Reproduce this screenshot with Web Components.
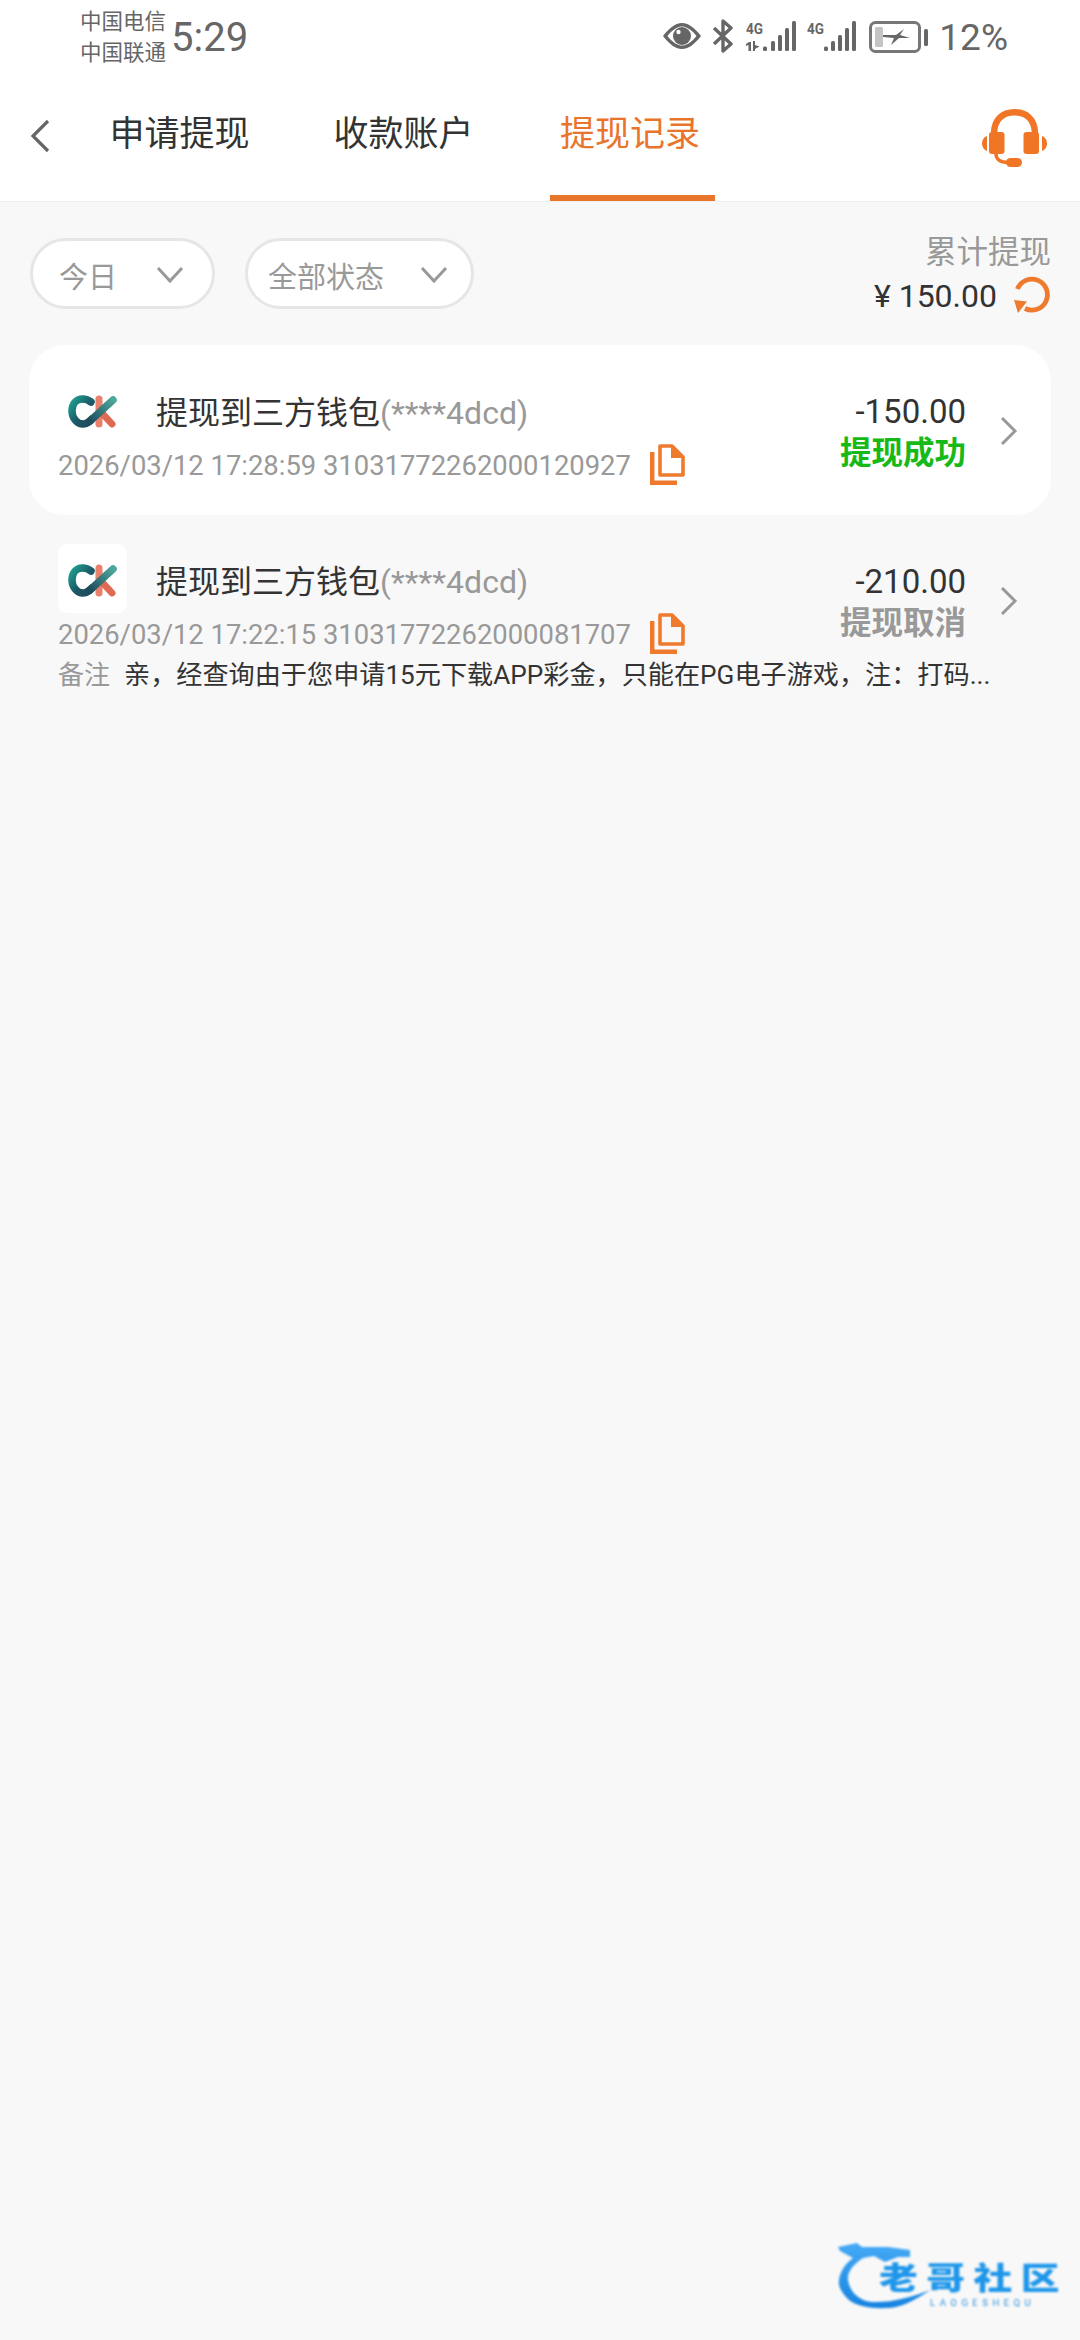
<!DOCTYPE html>
<html lang="zh">
<head>
<meta charset="utf-8">
<title>提现记录</title>
<style>
	html, body {
		margin: 0;
		padding: 0;
		background: #f8f8f8;
		font-family: Roboto, "Noto Sans CJK SC", sans-serif;
	}
	body {
		width: 1080px;
		height: 2340px;
		overflow: hidden;
		position: relative;
	}
</style>
</head>
<body>
<status-bar></status-bar>
<tab-bar>
	<tab-item>申请提现</tab-item>
	<tab-item>收款账户</tab-item>
	<tab-item active>提现记录</tab-item>
</tab-bar>
<filter-bar>
	<filter-pill style="--pl:26px;--pr:28px;--gap:39px">今日</filter-pill>
	<filter-pill style="--pl:20px;--pr:23px;--gap:36px">全部状态</filter-pill>
	<withdraw-total slot="total">¥ 150.00</withdraw-total>
</filter-bar>
<record-list>
	<record-row card>
		<span slot="account">(****4dcd)</span>
		<span slot="meta">2026/03/12 17:28:59 31031772262000120927</span>
		<span slot="amount">-150.00</span>
		<span slot="state" style="color:#17b917">提现成功</span>
	</record-row>
	<record-row>
		<span slot="account">(****4dcd)</span>
		<span slot="meta">2026/03/12 17:22:15 31031772262000081707</span>
		<span slot="amount">-210.00</span>
		<span slot="state" style="color:#999">提现取消</span>
		<span slot="note">亲，经查询由于您申请15元下载APP彩金，只能在PG电子游戏，注：打码...</span>
	</record-row>
</record-list>
<water-mark></water-mark>

<script>
// status bar
window.customElements.define('status-bar', class extends HTMLElement {
	constructor() {
		super();
		let shadowRoot = this.attachShadow({mode: 'open'});
		shadowRoot.innerHTML = `
<style>
	:host {
		display: flex;
		align-items: flex-start;
		height: 72px;
		box-sizing: border-box;
		padding: 6px 72px 0 80px;
		background: #fff;
		color: #666;
	}
	.carrier {
		font-size: 21.500px;
		line-height: 31px;
		width: 91px;
	}
	.time {
		font-size: 40px;
		line-height: 40px;
		margin-top: 12px;
	}
	.icons {
		margin-left: auto;
		display: flex;
		align-items: flex-start;
		padding-top: 14px;
	}
	svg { display: block; fill: #666; flex: none; }
	.pct {
		font-size: 37px;
		line-height: 38px;
		margin: -1px 0 0 11px;
	}
	text { font: bold 15px Roboto, sans-serif; }
</style>
<div class="carrier">中国电信<br>中国联通</div>
<div class="time">5:29</div>
<div class="icons">
	<svg width="38" height="26" viewBox="0 0 38 26" style="margin-top:3px">
		<path d="M0 13 C7 4 13 0 19 0 C25 0 31 4 38 13 C31 22 25 26 19 26 C13 26 7 22 0 13Z M4.500 13 C10 20 15 22.500 19 22.500 C23 22.500 28 20 33.500 13 C28 6 23 3.500 19 3.500 C15 3.500 10 6 4.500 13Z"/>
		<circle cx="19" cy="13" r="9"/>
		<circle cx="15.500" cy="9" r="2.200" fill="#fff"/>
	</svg>
	<svg width="22" height="34" viewBox="0 0 22 34" style="margin-left:11px;margin-top:-1px">
		<path d="M2 9 L19 25 L11 32 V2 L19 9 L2 25" fill="none" stroke="#666" stroke-width="3.400" stroke-linejoin="round"/>
	</svg>
	<svg width="50" height="34" viewBox="0 0 50 34" style="margin-left:12px">
		<text x="0" y="14" textLength="17" lengthAdjust="spacingAndGlyphs">4G</text>
		<path d="M0 24 L3 22 H5 V31 H2.500 V25 L0 26Z M7 21 H9 V25 L13.500 26.500 L9 29 V31 H7Z"/>
		<rect x="17" y="26.500" width="4" height="4.500" rx="1.500"/>
		<rect x="25" y="21" width="4" height="10" rx="1.500"/>
		<rect x="32" y="15" width="4" height="16" rx="1.500"/>
		<rect x="39" y="8" width="4" height="23" rx="1.500"/>
		<rect x="46" y="1" width="4" height="30" rx="1.500"/>
	</svg>
	<svg width="49" height="34" viewBox="0 0 49 34" style="margin-left:11px">
		<text x="0" y="14" textLength="17" lengthAdjust="spacingAndGlyphs">4G</text>
		<rect x="17" y="26.500" width="4" height="4.500" rx="1.500"/>
		<rect x="24" y="21" width="4" height="10" rx="1.500"/>
		<rect x="31" y="15" width="4" height="16" rx="1.500"/>
		<rect x="38" y="8" width="4" height="23" rx="1.500"/>
		<rect x="45" y="1" width="4" height="30" rx="1.500"/>
	</svg>
	<svg width="59" height="34" viewBox="0 0 59 34" style="margin-left:13px">
		<rect x="1.500" y="2.500" width="49" height="29" rx="5" fill="none" stroke="#777" stroke-width="3"/>
		<rect x="6" y="7" width="8" height="20" rx="1.500" fill="#c4c4c4"/>
		<path d="M14 15 H27 L35 9 L31 15 L41 18 H30 L22 25 L25 18 L14 17Z"/>
		<rect x="55" y="9" width="4" height="17" rx="1.500"/>
	</svg>
	<div class="pct">12%</div>
</div>
		`;
	}
});
// tab bar
window.customElements.define('tab-bar', class extends HTMLElement {
	constructor() {
		super();
		let shadowRoot = this.attachShadow({mode: 'open'});
		shadowRoot.innerHTML = `
<style>
	:host {
		display: flex;
		align-items: flex-start;
		height: 130px;
		box-sizing: border-box;
		padding-left: 30px;
		background: #fff;
		border-bottom: 1px solid #efefef;
	}
	.back {
		width: 67px;
		flex: none;
		margin-top: 47px;
	}
	svg { display: block; }
	.head {
		margin: 37px 0 0 auto;
		padding-right: 33px;
	}
</style>
<div class="back">
	<svg width="20" height="34" viewBox="0 0 20 34"><path d="M18 2 L3 17 L18 32" fill="none" stroke="#666" stroke-width="3.200"/></svg>
</div>
<slot></slot>
<div class="head">
	<svg width="65" height="58" viewBox="0 0 65 58">
		<path d="M12 28 V25 C12 10 21 3.300 32.500 3.300 C44 3.300 53 10 53 25 V28" fill="none" stroke="#f07525" stroke-width="6.500"/>
		<rect x="7" y="23" width="15.500" height="22" rx="3" fill="#f07525"/>
		<rect x="41.500" y="23" width="15.500" height="22" rx="3" fill="#f07525"/>
		<path d="M5 27 V42 C2 41 0 38 0 34.500 C0 31 2 28 5 27Z M60 27 V42 C63 41 65 38 65 34.500 C65 31 63 28 60 27Z" fill="#f07525"/>
		<path d="M14 45 C14 50 18 53.500 26 53.500" fill="none" stroke="#f07525" stroke-width="3.500"/>
		<rect x="24" y="49" width="16" height="9" rx="4.500" fill="#f07525"/>
	</svg>
</div>
		`;
	}
});
window.customElements.define('tab-item', class extends HTMLElement {
	constructor() {
		super();
		let shadowRoot = this.attachShadow({mode: 'open'});
		shadowRoot.innerHTML = `
<style>
	:host {
		display: block;
		flex: none;
		width: 165px;
		height: 129px;
		box-sizing: border-box;
		padding-top: 39px;
		text-align: center;
		font-size: 35px;
		line-height: 48px;
		color: #333;
	}
	:host(:not(:first-of-type)) { margin-left: 59px; }
	:host([active]) {
		margin-left: 64px;
		padding-right: 5px;
		color: #e9742b;
		border-bottom: 6px solid #e9742b;
	}
</style>
<slot></slot>
		`;
	}
});
// filters
window.customElements.define('filter-bar', class extends HTMLElement {
	constructor() {
		super();
		let shadowRoot = this.attachShadow({mode: 'open'});
		shadowRoot.innerHTML = `
<style>
	:host {
		display: flex;
		align-items: flex-start;
		gap: 30px;
		height: 143px;
		box-sizing: border-box;
		padding: 36px 29px 0 30px;
	}
	.total { margin-left: auto; margin-top: -7px; }
</style>
<slot></slot>
<div class="total"><slot name="total"></slot></div>
		`;
	}
});
window.customElements.define('filter-pill', class extends HTMLElement {
	constructor() {
		super();
		let shadowRoot = this.attachShadow({mode: 'open'});
		shadowRoot.innerHTML = `
<style>
	:host {
		display: flex;
		align-items: center;
		height: 71px;
		box-sizing: border-box;
		padding: 3px var(--pr) 0 var(--pl);
		gap: var(--gap);
		background: #fff;
		border: 3px solid #e6e6e6;
		border-radius: 36px;
		font-size: 29px;
		color: #999;
	}
	svg { display: block; flex: none; }
</style>
<slot></slot>
<svg width="28" height="18" viewBox="0 0 28 18"><path d="M2 2 L14 15 L26 2" fill="none" stroke="#999" stroke-width="3"/></svg>
		`;
	}
});
window.customElements.define('withdraw-total', class extends HTMLElement {
	constructor() {
		super();
		let shadowRoot = this.attachShadow({mode: 'open'});
		shadowRoot.innerHTML = `
<style>
	:host {
		display: flex;
		flex-direction: column;
		align-items: flex-end;
	}
	.label {
		font-size: 31.500px;
		line-height: 44px;
		color: #999;
	}
	.value {
		display: flex;
		align-items: center;
		gap: 16px;
		font-size: 32px;
		line-height: 42px;
		color: #333;
	}
	svg { display: block; margin-top: -2px; }
</style>
<div class="label">累计提现</div>
<div class="value">
	<span><slot></slot></span>
	<svg width="38" height="38" viewBox="0 0 38 38">
		<path d="M4.500 13 A15.500 15.500 0 1 1 12 32.500" fill="none" stroke="#ee7a2d" stroke-width="4.800"/>
		<path d="M1 24 L14 25.500 L5 37Z" fill="#ee7a2d"/>
	</svg>
</div>
		`;
	}
});
// records
window.customElements.define('record-list', class extends HTMLElement {
	constructor() {
		super();
		let shadowRoot = this.attachShadow({mode: 'open'});
		shadowRoot.innerHTML = `
<style>
	:host {
		display: block;
		padding: 0 29px;
	}
</style>
<slot></slot>
		`;
	}
});
window.customElements.define('ck-logo', class extends HTMLElement {
	constructor() {
		super();
		let shadowRoot = this.attachShadow({mode: 'open'});
		shadowRoot.innerHTML = `
<style>
	:host {
		display: block;
		flex: none;
		width: 69px;
		height: 69px;
		border-radius: 9px;
		background: #fff;
	}
	svg { display: block; }
</style>
<svg width="69" height="69" viewBox="0 0 69 69">
	<defs>
		<linearGradient id="c" x1="0" y1="0" x2="1" y2="1">
			<stop offset="0" stop-color="#1f9e90"/>
			<stop offset="0.55" stop-color="#1b5865"/>
			<stop offset="1" stop-color="#1f4a5c"/>
		</linearGradient>
		<linearGradient id="d" x1="0" y1="1" x2="1" y2="0">
			<stop offset="0" stop-color="#1e4c5d"/>
			<stop offset="1" stop-color="#4da79a"/>
		</linearGradient>
	</defs>
	<g transform="translate(2 0)">
		<path d="M39 24 V49" stroke="#e8806c" stroke-width="7" stroke-linecap="round" fill="none"/>
		<path d="M41 37 L52 49" stroke="#df6a54" stroke-width="7" stroke-linecap="round" fill="none"/>
		<path d="M31 27 C28 24.500 25 24 22.500 24 C16 24 12 29 12 36 C12 43 17 49 23 49 C27 49 29 47 32 44" stroke="url(#c)" stroke-width="7.500" stroke-linecap="round" fill="none"/>
		<path d="M30 46 L53 25" stroke="url(#d)" stroke-width="7.500" stroke-linecap="round" fill="none"/>
	</g>
</svg>
		`;
	}
});
window.customElements.define('record-row', class extends HTMLElement {
	constructor() {
		super();
		let shadowRoot = this.attachShadow({mode: 'open'});
		shadowRoot.innerHTML = `
<style>
	:host {
		display: flex;
		box-sizing: border-box;
		padding: 29px 33px 30px 29px;
		border-radius: 36px;
		color: #333;
		--right-top: 16px;
		--chev-top: 41.500px;
	}
	:host([card]) {
		background: #fff;
		padding-top: 30px;
		padding-bottom: 27px;
		--right-top: 15px;
		--chev-top: 40.500px;
	}
	.body {
		flex: 1;
		min-width: 0;
	}
	.title {
		display: flex;
		align-items: center;
		height: 69px;
	}
	.name {
		margin-left: 29px;
		font-size: 32px;
		white-space: nowrap;
	}
	.account { color: #999; }
	.meta {
		display: flex;
		align-items: center;
		height: 44px;
		font-size: 27.400px;
		color: #999;
		white-space: nowrap;
	}
	.meta svg { display: block; margin-left: 19px; flex: none; margin-top: -3px; }
	.note {
		display: flex;
		height: 40px;
		margin-top: -2px;
		margin-right: -90px;
		font-size: 26.150px;
		line-height: 40px;
		white-space: nowrap;
	}
	.note b { font-weight: 400; color: #999; width: 66px; flex: none; font-size: 26px; }
	:host(:not([has-note])) .note { display: none; }
	.right {
		flex: none;
		text-align: right;
		margin-top: var(--right-top);
	}
	.amount { font-size: 33px; line-height: 44px; }
	.state { font-size: 31.500px; line-height: 38px; font-weight: 700; margin-top: 1px; }
	.chev { display: block; flex: none; margin: var(--chev-top) 0 0 34px; }
</style>
<div class="body">
	<div class="title">
		<ck-logo></ck-logo>
		<div class="name">提现到三方钱包<span class="account"><slot name="account"></slot></span></div>
	</div>
	<div class="meta">
		<slot name="meta"></slot>
		<svg width="36" height="41" viewBox="0 0 36 41">
			<path d="M2.200 8 V38.800 H27" fill="none" stroke="#ee7a2d" stroke-width="4.500"/>
			<path d="M10 2 H22 L33 13 V31 H10Z" fill="none" stroke="#ee7a2d" stroke-width="3.600" stroke-linejoin="round"/>
			<path d="M21 0.500 L34.500 14 H21Z" fill="#ee7a2d"/>
		</svg>
	</div>
	<div class="note"><b>备注</b><slot name="note"></slot></div>
</div>
<div class="right">
	<div class="amount"><slot name="amount"></slot></div>
	<div class="state"><slot name="state"></slot></div>
</div>
<svg class="chev" width="18" height="30" viewBox="0 0 18 30"><path d="M2 2 L15 15 L2 28" fill="none" stroke="#999" stroke-width="3"/></svg>
		`;
		if (this.querySelector('[slot="note"]')) {
			this.setAttribute('has-note', '');
		}
	}
});
// watermark in the corner, it lies over the page
window.customElements.define('water-mark', class extends HTMLElement {
	constructor() {
		super();
		let shadowRoot = this.attachShadow({mode: 'open'});
		shadowRoot.innerHTML = `
<style>
	:host {
		display: block;
		position: absolute;
		left: 838px;
		top: 2243px;
		width: 230px;
		height: 70px;
		filter: blur(0.800px);
	}
	svg { position: absolute; left: 0; top: 0; }
	.zh {
		position: absolute;
		left: 41px;
		top: 20px;
		font-size: 31px;
		line-height: 32px;
		font-weight: 900;
		letter-spacing: 6.800px;
		white-space: nowrap;
		color: #1e96ea;
		transform: scaleX(1.25);
		transform-origin: left center;
	}
	.en {
		position: absolute;
		left: 92px;
		top: 54px;
		font-size: 9.500px;
		line-height: 12px;
		letter-spacing: 4.500px;
		white-space: nowrap;
		color: #2a8fdc;
	}
</style>
<svg width="110" height="70" viewBox="0 0 110 70">
	<defs>
		<linearGradient id="w" x1="0" y1="0" x2="0" y2="1">
			<stop offset="0" stop-color="#46aaf5"/>
			<stop offset="1" stop-color="#1783e0"/>
		</linearGradient>
	</defs>
	<path d="M0 4 L19 0 L24 4 L50 4 L72 7 L72 14 L60 14 L47 19 L36 13 L25 15 C14 22 9 30 10 37 C12 50 22 58 34 59 C52 60 74 54 92 47 C76 58 62 65 49 65 C30 66 14 62 8 54 C3 48 0 43 1 37 C2 28 8 20 15 15 L2 8Z" fill="url(#w)"/>
</svg>
<div class="zh">老哥社区</div>
<div class="en">LAOGESHEQU</div>
		`;
	}
});
</script>
</body>
</html>
